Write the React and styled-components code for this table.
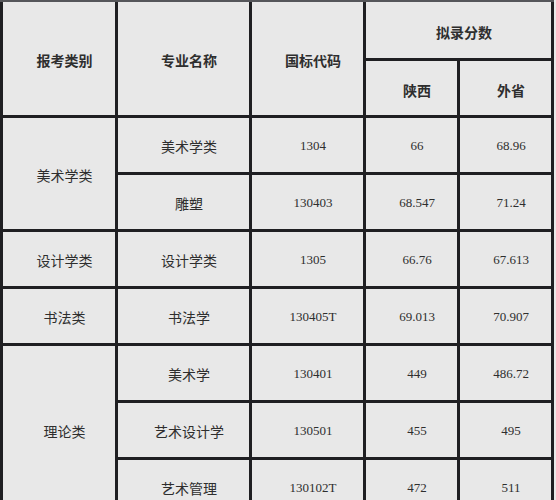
import React from "react";
import styled, { createGlobalStyle } from "styled-components";

const Global = createGlobalStyle`
  html, body {
    margin: 0;
    padding: 0;
    background: #e9e9e9;
    overflow: hidden;
  }
  body {
    font-family: "Liberation Serif", "Noto Sans CJK SC", serif;
  }
`;

const Table = styled.div`
  display: grid;
  width: 554px;
  box-sizing: border-box;
  grid-template-columns: 112px 131px 111px 91px 91px;
  grid-template-rows: 56px 54px repeat(7, 54px);
  gap: 3px;
  padding: 0 3px 3px 3px;
  border-top: 2px solid #55565a;
  background: #1f1f22;
`;

const Cell = styled.div`
  grid-row: span ${(p) => p.$rows || 1};
  grid-column: span ${(p) => p.$cols || 1};
  background: #e8e8e8;
  display: flex;
  align-items: center;
  justify-content: center;
  padding-left: 11px;
  padding-top: ${(p) => (p.$head ? 3 : 2)}px;
  box-sizing: border-box;
  color: #2e2e2e;
  font-size: ${(p) => (p.$num ? 13 : 14)}px;
  font-weight: ${(p) => (p.$head ? 700 : 400)};
  white-space: nowrap;
`;

const rows = [
  { cat: "美术学类", span: 2, items: [["美术学类", "1304", "66", "68.96"], ["雕塑", "130403", "68.547", "71.24"]] },
  { cat: "设计学类", span: 1, items: [["设计学类", "1305", "66.76", "67.613"]] },
  { cat: "书法类", span: 1, items: [["书法学", "130405T", "69.013", "70.907"]] },
  {
    cat: "理论类",
    span: 3,
    items: [
      ["美术学", "130401", "449", "486.72"],
      ["艺术设计学", "130501", "455", "495"],
      ["艺术管理", "130102T", "472", "511"],
    ],
  },
];

export default function App() {
  return (
    <>
      <Global />
      <Table>
        <Cell $head $rows={2}>报考类别</Cell>
        <Cell $head $rows={2}>专业名称</Cell>
        <Cell $head $rows={2}>国标代码</Cell>
        <Cell $head $cols={2}>拟录分数</Cell>
        <Cell $head>陕西</Cell>
        <Cell $head>外省</Cell>
        {rows.map((g) =>
          g.items.map((it, i) => (
            <React.Fragment key={g.cat + i}>
              {i === 0 && <Cell $rows={g.span}>{g.cat}</Cell>}
              <Cell>{it[0]}</Cell>
              <Cell $num>{it[1]}</Cell>
              <Cell $num>{it[2]}</Cell>
              <Cell $num>{it[3]}</Cell>
            </React.Fragment>
          ))
        )}
      </Table>
    </>
  );
}
